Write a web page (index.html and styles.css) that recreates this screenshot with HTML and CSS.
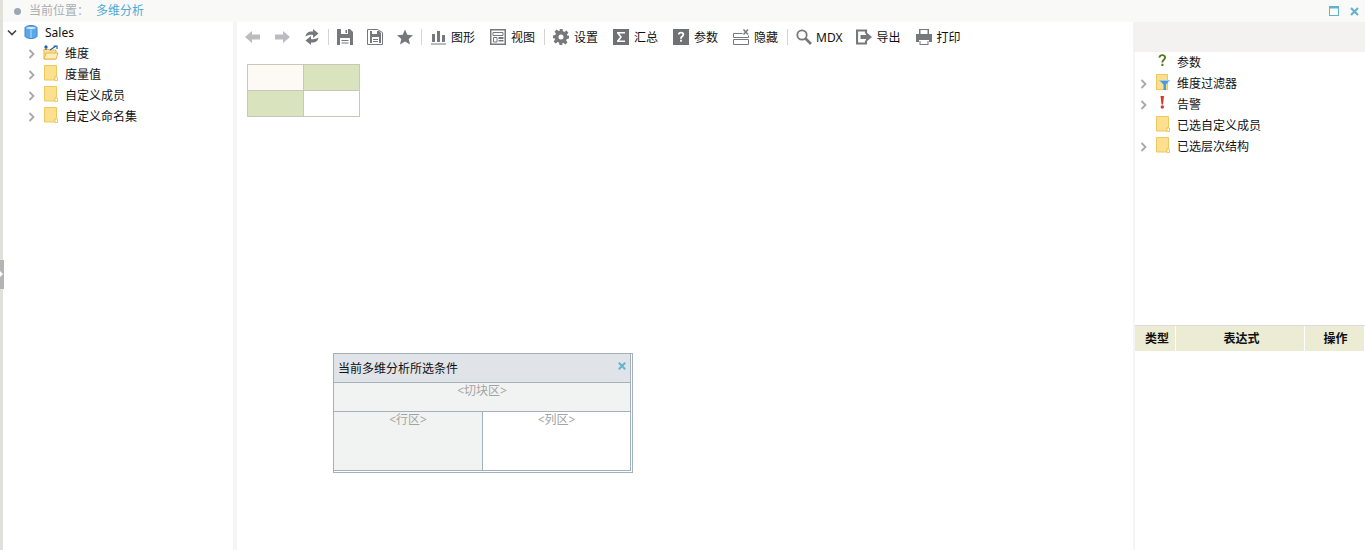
FILE: index.html
```html
<!DOCTYPE html>
<html lang="zh">
<head>
<meta charset="utf-8">
<title>多维分析</title>
<link rel="stylesheet" href="styles.css">
</head>
<body>
<svg class="defs" width="0" height="0">
  <symbol id="doc" viewBox="0 0 14 16"><path d="M.5.5h12v11h-1.500v3.500H.5z" fill="#fde08f" stroke="#edc85c"/><path d="M11 15.500v-3.500h2.500v3.500z" fill="#fff" stroke="#edc85c"/></symbol>
  <symbol id="chev" viewBox="0 0 8 10"><path d="M1.500 1l4 4-4 4" fill="none" stroke="#a8a8a8" stroke-width="1.800"/></symbol>
</svg>
<div class="strip"><div class="handle"><span class="notch"></span></div></div>
<div class="app">
  <header class="top">
    <span class="dot"></span><span class="crumb">当前位置：</span><span class="crumb-link">多维分析</span>
    <span class="win">
      <svg width="10" height="10" viewBox="0 0 10 10"><rect x=".5" y=".5" width="9" height="9" fill="#fff" stroke="#5fb2d2"/><rect width="10" height="2.500" fill="#5fb2d2"/></svg>
      <svg class="win-x" width="9" height="9" viewBox="0 0 9 9"><path d="M1 1l7 7M8 1l-7 7" stroke="#63b4d3" stroke-width="2.200"/></svg>
    </span>
  </header>
  <div class="main">
    <aside class="left">
      <div class="row root">
        <svg class="chev-root" width="10" height="8" viewBox="0 0 10 8"><path d="M1 1.500l4 4 4-4" fill="none" stroke="#444" stroke-width="1.600"/></svg>
        <svg class="ic" width="14" height="14" viewBox="0 0 14 14"><path d="M1 3C1 1.500 4 .5 7 .5s6 1 6 2.500v8c0 1.500-3 2.500-6 2.500s-6-1-6-2.500z" fill="#5aa8ea" stroke="#3f86cf"/><path d="M2 3c1.500-1.300 8.500-1.300 10 0-1.500 1.500-8.500 1.500-10 0z" fill="#d6eafb"/><path d="M7 5v8" stroke="#b8dcf8"/></svg>
        <span>Sales</span>
      </div>
      <div class="row sub">
        <svg class="chev" width="8" height="10"><use href="#chev"/></svg>
        <svg class="ic ic-dim" width="16" height="15" viewBox="0 0 16 15"><path d="M1 14V4h4l1 1h7v9z" fill="#fde08f" stroke="#e7b64c"/><path d="M1 14l2-6h12l-2 6z" fill="#fdeeb8" stroke="#e7b64c"/><path d="M3 5V1M1.500 2.500L3 .8l1.500 1.700M7 5l6-4M10.500 1H14v3" fill="none" stroke="#1f5fae" stroke-width="1.200"/></svg>
        <span>维度</span>
      </div>
      <div class="row sub"><svg class="chev" width="8" height="10"><use href="#chev"/></svg><svg class="ic" width="14" height="16"><use href="#doc"/></svg><span>度量值</span></div>
      <div class="row sub"><svg class="chev" width="8" height="10"><use href="#chev"/></svg><svg class="ic" width="14" height="16"><use href="#doc"/></svg><span>自定义成员</span></div>
      <div class="row sub"><svg class="chev" width="8" height="10"><use href="#chev"/></svg><svg class="ic" width="14" height="16"><use href="#doc"/></svg><span>自定义命名集</span></div>
    </aside>
    <section class="center">
      <nav class="toolbar">
        <svg class="btn" width="16" height="16" viewBox="0 0 16 16"><path d="M0 8l7-6v3.500h8v5H7V14z" fill="#bcbcc0"/></svg>
        <svg class="btn" width="16" height="16" viewBox="0 0 16 16"><path d="M15 8L8 2v3.500H0v5h8V14z" fill="#bcbcc0"/></svg>
        <svg class="btn last" width="16" height="16" viewBox="0 0 16 16"><path d="M.5 7.500C1 3 5 2 8 2.500V0l5.500 4.500L8 9V6C5.500 5.500 3 6 .5 7.500zM13.500 8.500C13 13 9 14 6 13.500V16L.5 11.500 6 7v3c2.500.5 5 0 7.500-1.500z" fill="#76787c"/></svg>
        <i class="sep"></i>
        <svg class="btn" width="16" height="16" viewBox="0 0 16 16"><path d="M0 0h13l3 3v13H0z" fill="#76787c"/><path d="M4 0h7v5H4z" fill="#fff"/><path d="M8.500 1h1.500v3H8.500z" fill="#76787c"/><path d="M3 9h10v7H3z" fill="#fff"/><path d="M4.500 11h7v1h-7zM4.500 13.500h7v1h-7z" fill="#76787c"/></svg>
        <svg class="btn" width="16" height="16" viewBox="0 0 16 16"><path d="M.5.500h10l5 3v12H.5z" fill="#fff" stroke="#76787c"/><path d="M3 2h9l2 2v10H3z" fill="#76787c"/><path d="M5 2h5v3H5zM5 8h7v6H5z" fill="#fff"/><path d="M6 10h5v1H6zM6 12h5v1H6z" fill="#76787c"/></svg>
        <svg class="btn last wide" width="16" height="16" viewBox="0 0 16 16"><path d="M8 .5l2.300 5.200 5.700.5-4.300 3.700 1.300 5.600L8 12.600l-5 2.900 1.300-5.600L0 6.200l5.700-.5z" fill="#76787c"/></svg>
        <i class="sep sep-wide"></i>
        <div class="tool tight"><svg width="16" height="16" viewBox="0 0 16 16"><path d="M1 5h3v8H1zM6 2h3v11H6zM11 6h3v7h-3zM0 14.500h15v1H0z" fill="#76787c"/></svg><span>图形</span></div>
        <div class="tool"><svg width="16" height="16" viewBox="0 0 16 16"><path d="M0 0h16v16H0z" fill="#76787c"/><path d="M1.500 1.500h13v13h-13z" fill="#fff"/><path d="M3 3.500h10v3H3z" fill="none" stroke="#76787c"/><path d="M3.500 8.500h3.500v4.500H3.500z" fill="none" stroke="#76787c"/><path d="M8.500 8h5v2h-5zM8.500 11h5v1.500h-5z" fill="#76787c"/></svg><span>视图</span></div>
        <i class="sep sep-tool"></i>
        <div class="tool"><svg width="16" height="16" viewBox="0 0 16 16"><path fill-rule="evenodd" d="M6.500 0h3l.4 2.300 1.500.6L13.300 1.500l2.100 2.100-1.400 1.900.6 1.500L16 6.500v3l-2.300.4-.6 1.500 1.400 1.900-2.100 2.100-1.900-1.400-1.500.6L9.500 16h-3l-.4-2.300-1.500-.6-1.900 1.400-2.100-2.100L2 10.500l-.6-1.500L0 9.500v-3l2.300-.4.600-1.500L1.500 2.700l2.100-2.100 1.900 1.400 1.500-.6zM8 5.500a2.500 2.500 0 100 5 2.500 2.500 0 000-5z" fill="#76787c"/></svg><span>设置</span></div>
        <div class="tool"><svg width="16" height="16" viewBox="0 0 16 16"><path d="M0 0h16v16H0z" fill="#6f7175"/><path d="M4 3h8v1.500H6.300L9 8l-2.700 3.500H12V13H4v-1.200L7 8 4 4.200z" fill="#fff"/></svg><span>汇总</span></div>
        <div class="tool"><svg width="16" height="16" viewBox="0 0 16 16"><path d="M0 0h16v16H0z" fill="#6f7175"/><path d="M4.800 5.500C5 3.500 6.500 2.800 8 2.800c2 0 3.300 1.100 3.300 2.700 0 2.200-2.400 2.300-2.400 4.200H7.100c0-2.700 2.300-2.800 2.300-4.200 0-.7-.6-1.100-1.400-1.100s-1.400.4-1.500 1.100zM7.100 10.700h1.800v2.100H7.100z" fill="#fff"/></svg><span>参数</span></div>
        <div class="tool"><svg width="16" height="16" viewBox="0 0 16 16"><path d="M9.500 4.500H.5v4h15v-2M.5 10.500h15v5H.5z" fill="none" stroke="#76787c"/><path d="M10.500.5l4.500 5M15 .5l-4.500 5" stroke="#76787c" stroke-width="1.500"/></svg><span>隐藏</span></div>
        <i class="sep sep-tool"></i>
        <div class="tool tight mdx"><svg width="16" height="16" viewBox="0 0 16 16"><circle cx="6" cy="6" r="4.700" fill="#fff" stroke="#76787c" stroke-width="1.800"/><path d="M9.500 9.500l5.500 5.500" stroke="#76787c" stroke-width="2.600"/></svg><span>MDX</span></div>
        <div class="tool"><svg width="16" height="16" viewBox="0 0 16 16"><path d="M10 4.500V1.500H1v13h9V11.500" fill="none" stroke="#76787c" stroke-width="2.200"/><path d="M4.500 6h5.500V3l6 5-6 5v-3H4.500z" fill="#76787c"/></svg><span>导出</span></div>
        <div class="tool"><svg width="16" height="16" viewBox="0 0 16 16"><path d="M3 0h10v5H3zM0 5h16v8h-3v-2H3v2H0z" fill="#76787c"/><path d="M3.500 12h9v4h-9z" fill="#76787c"/><path d="M4.500 1h7v4h-7zM4.500 12h7v3h-7z" fill="#fff"/></svg><span>打印</span></div>
      </nav>
      <table class="grid">
        <tr><td class="corner"></td><td class="green"></td></tr>
        <tr><td class="green"></td><td></td></tr>
      </table>
    </section>
    <aside class="right">
      <div class="right-head"></div>
      <div class="right-tree">
        <div class="row rrow"><i class="nochev"></i><svg class="ic" width="14" height="14" viewBox="0 0 14 14"><path d="M2.500 3.500C2.800 1.300 4.500.3 6.300.3c2.200 0 3.700 1.300 3.700 3.100 0 2.500-2.700 2.800-2.700 5.100H5.500c0-3 2.600-3.200 2.600-5 0-.9-.7-1.500-1.800-1.500s-1.800.6-2 1.700zM5.400 9.800h2v2.200h-2z" fill="#4f7a1c"/></svg><span>参数</span></div>
        <div class="row rrow"><svg class="chev" width="8" height="10"><use href="#chev"/></svg><svg class="ic" width="14" height="16" viewBox="0 0 14 16"><path d="M.5.500h11v15H.5z" fill="#fde08f" stroke="#edc85c"/><path d="M3 6h11L10 10.500V16H7.500v-5.500z" fill="#4a9be0"/><path d="M3 6h11v1H3z" fill="#9ccbf2"/></svg><span>维度过滤器</span></div>
        <div class="row rrow"><svg class="chev" width="8" height="10"><use href="#chev"/></svg><svg class="ic" width="14" height="14" viewBox="0 0 14 14"><path d="M4.500 0h3.500L7 8.500H5.500z" fill="#d9382a"/><circle cx="6.300" cy="11" r="1.700" fill="#c8402c"/></svg><span>告警</span></div>
        <div class="row rrow"><i class="nochev"></i><svg class="ic" width="14" height="16"><use href="#doc"/></svg><span>已选自定义成员</span></div>
        <div class="row rrow"><svg class="chev" width="8" height="10"><use href="#chev"/></svg><svg class="ic" width="14" height="16"><use href="#doc"/></svg><span>已选层次结构</span></div>
      </div>
      <div class="rule-head">
        <div class="c1">类型</div><div class="c2">表达式</div><div class="c3">操作</div>
      </div>
    </aside>
  </div>
</div>
<div class="dialog">
  <div class="dialog-in">
    <div class="d-title"><span>当前多维分析所选条件</span><svg width="8" height="8" viewBox="0 0 8 8"><path d="M.8.800l6.400 6.400M7.200.800L.8 7.200" stroke="#63b4d3" stroke-width="2"/></svg></div>
    <div class="d-slice">&lt;切块区&gt;</div>
    <div class="d-body">
      <div class="d-row">&lt;行区&gt;</div>
      <div class="d-col">&lt;列区&gt;</div>
    </div>
  </div>
</div>
</body>
</html>
```
FILE: styles.css
```css
* { box-sizing: border-box; }
html, body { margin: 0; height: 100%; overflow: hidden; }
body {
  display: flex;
  height: 550px;
  background: #fff;
  color: #111;
  font: 12px/16px "Noto Sans", "Noto Sans CJK SC", sans-serif;
}
.defs { position: absolute; }
.strip { width: 3px; flex: none; background: #e2e0da; position: relative; }
.handle { position: absolute; left: 0; top: 260px; width: 4px; height: 29px; background: #b4b4b4; }
.notch { position: absolute; left: 0; top: 11px; width: 3px; height: 6px; background: #fff; clip-path: polygon(0 0, 100% 50%, 0 100%); }
.app { flex: 1; min-width: 0; display: flex; flex-direction: column; }

.top { height: 22px; flex: none; background: #f9f9f7; display: flex; align-items: center; padding: 0 6px 0 11px; }
.dot { width: 7px; height: 7px; border-radius: 50%; background: #9aa8b4; margin-right: 8px; }
.crumb { color: #a9aeb3; width: 67px; }
.crumb-link { color: #4cabd6; }
.win { margin-left: auto; display: flex; align-items: center; gap: 11px; }

.main { flex: 1; min-height: 0; display: flex; }
.left { width: 230px; flex: none; }
.center { width: 902px; flex: none; border-left: 4px solid #f5f5f5; border-right: 2px solid #f5f5f5; }
.right { flex: 1; min-width: 0; display: flex; flex-direction: column; }

.row { height: 21px; display: flex; align-items: center; padding-left: 4px; white-space: nowrap; }
.row > .ic { margin-left: 7px; margin-bottom: 4px; flex: none; }
.row > .ic + span { margin-left: 7px; }
.chev-root { flex: none; }
.root > .ic { margin-left: 7px; margin-bottom: 2px; }
.root span { padding-top: 1px; }
.sub { padding-left: 25px; }
.sub > .ic { margin-left: 8px; }
.sub > .ic-dim { margin-left: 7px; margin-bottom: 2px; }
.sub > .ic-dim + span { margin-left: 6px; }
.chev { flex: none; }

.toolbar { height: 30px; display: flex; align-items: center; padding-left: 8px; }
.toolbar span { padding-top: 2px; }
.btn { flex: none; margin-right: 14px; }
.btn.last { margin-right: 7px; }
.btn.wide { margin-right: 8px; }
.sep { width: 1px; height: 16px; flex: none; background: #d4d4d4; margin-right: 8px; }
.sep-wide { margin-right: 9px; }
.sep-tool { margin-left: -6px; }
.tool { display: flex; align-items: center; gap: 5px; margin-right: 15px; white-space: nowrap; }
.tool svg { flex: none; }
.tool.tight { gap: 4px; }
.tool.mdx { margin-right: 13px; }
.grid { border-collapse: collapse; margin: 12px 0 0 10px; table-layout: fixed; width: 113px; height: 53px; background: #fff; }
.grid td { border: 1px solid #c9c7b8; padding: 0; }
.corner { background: #fdf9f5; }
.green { background: #d9e4bf; }

.right-head { height: 30px; flex: none; background: #f3f2f1; margin-left: -2px; }
.right-tree { height: 273px; flex: none; }
.rrow { padding-left: 5px; }
.rrow > .ic { margin-left: 8px; }
.nochev { width: 8px; flex: none; }
.rule-head { display: flex; height: 26px; border-top: 1px solid #dcdcdc; font-weight: 700; text-align: center; line-height: 25px; }
.rule-head > div { background: #ececd5; border-right: 1px solid #fff; }
.c1 { width: 41px; padding-left: 4px; }
.c2 { width: 129px; padding-left: 3px; }
.c3 { flex: 1; padding-left: 2px; }

.dialog { position: absolute; left: 333px; top: 353px; width: 300px; height: 120px; border: 1px solid #a3b0bd; background: #fff; padding: 0 1px 1px 0; }
.dialog-in { height: 100%; border-right: 1px solid #a3b0bd; border-bottom: 1px solid #a3b0bd; display: flex; flex-direction: column; }
.d-title { height: 29px; flex: none; background: #e0e3e7; display: flex; align-items: center; justify-content: space-between; padding: 0 4px; border-bottom: 1px solid #a3b0bd; }
.d-title span { padding-top: 2px; }
.d-title svg { margin-top: -5px; }
.d-slice { height: 29px; flex: none; background: #f1f3f2; color: #a3a3a3; text-align: center; border-bottom: 1px solid #a3b0bd; }
.d-body { flex: 1; display: flex; color: #a3a3a3; text-align: center; }
.d-row { width: 149px; background: #f1f3f2; border-right: 1px solid #a3b0bd; }
.d-col { flex: 1; background: #fff; }
```
